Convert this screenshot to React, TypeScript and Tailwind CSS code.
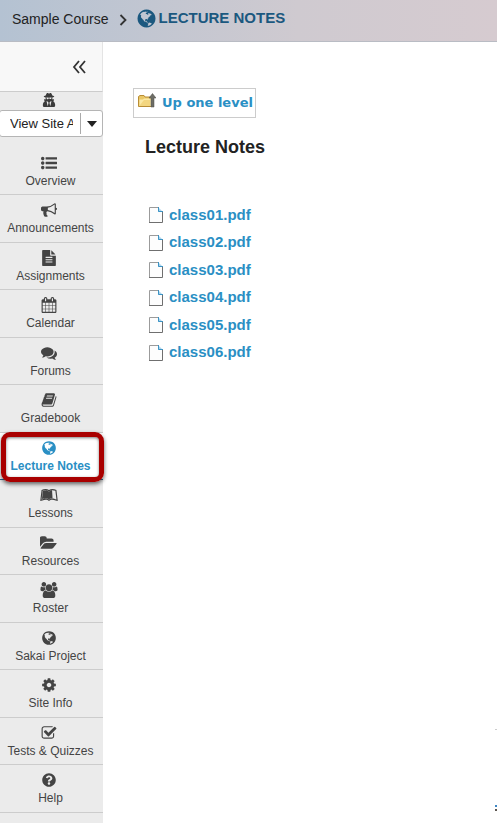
import type { ReactNode } from "react";
import { FaLeanpub, FaQuestionCircle, FaUserSecret } from "react-icons/fa";

function Glyph({ d, box = "0 0 1792 1792", className = "size-4" }: { d: string; box?: string; className?: string }) {
  return (
    <svg viewBox={box} className={className} fill="currentColor" aria-hidden="true">
      <path d={d} />
    </svg>
  );
}

const LIST =
  "M384 1408q0 80-56 136t-136 56-136-56-56-136 56-136 136-56 136 56 56 136zm0-512q0 80-56 136t-136 56-136-56-56-136 56-136 136-56 136 56 56 136zm1408 416v192q0 13-9.500 22.500t-22.500 9.500h-1216q-13 0-22.500-9.500t-9.500-22.500v-192q0-13 9.500-22.500t22.500-9.500h1216q13 0 22.500 9.500t9.500 22.500zm-1408-928q0 80-56 136t-136 56-136-56-56-136 56-136 136-56 136 56 56 136zm1408 416v192q0 13-9.500 22.500t-22.500 9.500h-1216q-13 0-22.500-9.500t-9.500-22.500v-192q0-13 9.500-22.500t22.500-9.500h1216q13 0 22.500 9.500t9.500 22.500zm0-512v192q0 13-9.500 22.500t-22.500 9.500h-1216q-13 0-22.500-9.500t-9.500-22.500v-192q0-13 9.500-22.500t22.500-9.500h1216q13 0 22.500 9.500t9.500 22.500z";
const BULLHORN =
  "M1664 640q53 0 90.5 37.5t37.5 90.5-37.5 90.5-90.5 37.5v384q0 52-38 90t-90 38q-417-347-812-380-58 19-91 66t-31 100.5 40 92.5q-20 33-23 65.5t6 58 33.5 55 48 50 61.5 50.5q-29 58-111.5 83t-168.5 11.5-132-55.5q-7-23-29.5-87.5t-32-94.5-23-89-15-101 3.5-98.5 22-110.5h-122q-66 0-113-47t-47-113v-192q0-66 47-113t113-47h480q435 0 896-384 52 0 90 38t38 90v384zm-128 604v-954q-394 302-768 343v270q377 42 768 341z";
const FILE =
  "M1596 476q14 14 28 36h-472v-472q22 14 36 28zm-476 164h544v1056q0 40-28 68t-68 28h-1344q-40 0-68-28t-28-68v-1600q0-40 28-68t68-28h800v544q0 40 28 68t68 28zm160 736v-64q0-14-9-23t-23-9h-704q-14 0-23 9t-9 23v64q0 14 9 23t23 9h704q14 0 23-9t9-23zm0-256v-64q0-14-9-23t-23-9h-704q-14 0-23 9t-9 23v64q0 14 9 23t23 9h704q14 0 23-9t9-23zm0-256v-64q0-14-9-23t-23-9h-704q-14 0-23 9t-9 23v64q0 14 9 23t23 9h704q14 0 23-9t9-23z";
const CALENDAR =
  "M192 1664h288v-288h-288v288zm352 0h320v-288h-320v288zm-352-352h288v-320h-288v320zm352 0h320v-320h-320v320zm-352-384h288v-288h-288v288zm736 736h320v-288h-320v288zm-384-736h320v-288h-320v288zm768 736h288v-288h-288v288zm-384-352h320v-320h-320v320zm-352-864v-288q0-13-9.5-22.5t-22.5-9.5h-64q-13 0-22.5 9.5t-9.5 22.5v288q0 13 9.5 22.5t22.5 9.5h64q13 0 22.5-9.5t9.5-22.5zm736 864h288v-320h-288v320zm-384-384h320v-288h-320v288zm384 0h288v-288h-288v288zm32-480v-288q0-13-9.5-22.5t-22.5-9.5h-64q-13 0-22.5 9.5t-9.5 22.5v288q0 13 9.5 22.5t22.5 9.5h64q13 0 22.5-9.5t9.5-22.5zm384-64v1280q0 52-38 90t-90 38h-1408q-52 0-90-38t-38-90v-1280q0-52 38-90t90-38h128v-96q0-66 47-113t113-47h64q66 0 113 47t47 113v96h384v-96q0-66 47-113t113-47h64q66 0 113 47t47 113v96h128q52 0 90 38t38 90z";
const COMMENTS =
  "M1408 768q0 139-94 257t-256.5 186.5-353.5 68.5q-86 0-176-16-124 88-278 128-36 9-86 16h-3q-11 0-20.5-8t-11.5-21q-1-3-1-6.5t.5-6.5 2-6l2.5-5 3.5-5.5 4-5 4.5-5 4-4.5q5-6 23-25t26-29.5 22.5-29 25-38.5 20.5-44q-124-72-195-177t-71-224q0-139 94-257t256.5-186.5 353.5-68.5 353.5 68.5 256.5 186.5 94 257zm384 256q0 120-71 224.5t-195 176.5q10 24 20.5 44t25 38.5 22.5 29 26 29.5 23 25q1 1 4 4.5t4.5 5 4 5 3.5 5.5l2.5 5 2 6 .5 6.5-1 6.5q-3 14-13 22t-22 7q-50-7-86-16-154-40-278-128-90 16-176 16-271 0-472-132 58 4 88 4 161 0 309-45t264-129q125-92 192-212t67-254q0-77-23-152 129 71 204 178t75 230z";
const BOOK =
  "M1703 478q40 57 18 129l-275 906q-19 64-76.5 107.5t-122.5 43.5h-923q-77 0-148.5-53.5t-99.5-131.5q-24-67-2-127 0-4 3-27t4-37q1-8-3-21.5t-3-19.5q2-11 8-21t16.5-23.5 16.5-23.5q23-38 45-91.5t30-91.5q3-10 .5-30t-.5-28q3-11 17-28t17-23q21-36 42-92t25-90q1-9-2.500-32t.5-28q4-13 22-30.5t22-22.5q19-26 42.5-84.5t27.5-96.5q1-8-3-25.5t-2-26.5q2-8 9-18t18-23 17-21q8-12 16.5-30.5t15-35 16-36 19.5-32 26.5-23.5 36-11.5 47.5 5.5l-1 3q38-9 51-9h761q74 0 114 56t18 130l-274 906q-36 119-71.5 153.5t-128.5 34.5h-869q-27 0-38 15-11 16-1 43 24 70 144 70h923q29 0 56-15.5t35-41.5l300-987q7-22 5-57 38 15 59 43zm-1064 2q-4 13 2 22.5t20 9.5h608q13 0 25.5-9.5t16.5-22.5l21-64q4-13-2-22.5t-20-9.5h-608q-13 0-25.5 9.5t-16.5 22.5zm-83 256q-4 13 2 22.5t20 9.5h608q13 0 25.5-9.5t16.5-22.5l21-64q4-13-2-22.5t-20-9.5h-608q-13 0-25.5 9.5t-16.5 22.5z";
const GLOBE =
  "M896 128q209 0 385.5 103t279.5 279.5 103 385.5-103 385.5-279.5 279.5-385.5 103-385.5-103-279.5-279.5-103-385.5 103-385.5 279.5-279.5 385.5-103zm274 521q-2 1-9.5 9.5t-13.5 9.5q2 0 4.5-5t5-11 3.5-7q6-7 22-15 14-6 52-12 34-8 51 11-2-2 9.5-13t14.5-12q3-2 15-4.5t15-7.5l2-22q-12 1-17.5-7t-6.5-21q0 2-6 8 0-7-4.5-8t-11.5 1-9 1q-10-3-15-7.5t-8-16.5-4-15q-2-5-9.5-11t-9.5-10q-1-2-2.5-5.5t-3-6.5-4-5.5-5.5-2.5-7 5-7.5 10-4.5 5q-3-2-6-1.5t-4.5 1-4.5 3-5 3.5q-3 2-8.5 3t-8.5 2q15-5-1-11-10-4-16-3 9-4 7.5-12t-8.5-14h5q-1-4-8.5-8.5t-17.5-8.5-13-6q-8-5-34-9.5t-33-.5q-5 6-4.5 10.5t4 14 3.5 12.5q1 6-5.5 13t-6.5 12q0 7 14 15.5t10 21.5q-3 8-16 16t-16 12q-5 8-1.5 18.5t10.5 16.5q2 2 1.5 4t-3.5 4.5-5.5 4-6.5 3.5l-3 2q-11 5-20.5-6t-13.5-26q-7-25-16-30-23-8-29 1-5-13-41-26-25-9-58-4 6-1 0-15-7-15-19-12 3-6 4-17.5t1-13.5q3-13 12-23 1-1 7-8.5t9.5-13.5.5-6q35 4 50-11 5-5 11.5-17t10.5-17q9-6 14-5.5t14.5 5.5 14.5 5q14 1 15.5-11t-7.5-20q12 1 3-17-4-7-8-9-12-4-27 5-8 4 2 8-1-1-9.5 10.5t-16.5 17.5-16-5q-1-1-5.5-13.5t-9.5-13.5q-8 0-16 15 3-8-11-15t-24-8q19-12-8-27-7-4-20.5-5t-19.5 4q-5 7-5.5 11.5t5 8 10.5 5.5 11.5 4 8.5 3q14 10 8 14-2 1-8.5 3.5t-11.5 4.5-6 4q-3 4 0 14t-2 14q-5-5-9-17.5t-7-16.5q7 9-25 6l-10-1q-4 0-16 2t-20.5 1-13.5-8q-4-8 0-20 1-4 4-2-4-3-11-9.5t-10-8.5q-46 15-94 41 6 1 12-1 5-2 13-6.5t10-5.5q34-14 42-7l5-5q14 16 20 25-7-4-30-1-20 6-22 12 7 12 5 18-4-3-11.5-10t-14.5-11-15-5q-16 0-22 1-146 80-235 222 7 7 12 8 4 1 5 9t2.5 11 11.5-3q9 8 3 19 1-1 44 27 19 17 21 21 3 11-10 18-1-2-9-9t-9-4q-3 5 .5 18.5t10.5 12.5q-7 0-9.5 16t-2.5 35.5-1 23.5l2 1q-3 12 5.5 34.5t21.5 19.5q-13 3 20 43 6 8 8 9 3 2 12 7.5t15 10 10 10.5q4 5 10 22.5t14 23.5q-2 6 9.5 20t10.5 23q-1 0-2.5 1t-2.5 1q3 7 15.5 14t15.5 13q1 3 2 10t3 11 8 2q2-20-24-62-15-25-17-29-3-5-5.5-15.5t-4.5-14.5q2 0 6 1.5t8.5 3.5 7.5 4 2 3q-3 7 2 17.5t12 18.5 17 19 12 13q6 6 14 19.5t0 13.5q9 0 20 10.5t17 19.5q5 8 8 26t5 24q2 7 8.5 13.5t12.5 9.5l16 8 13 7q5 2 18.5 10.5t21.5 11.5q10 4 16 4t14.5-2.5 13.5-3.5q15-2 29 15t21 21q36 19 55 11-2 1 .5 7.5t8 15.5 9 14.5 5.5 8.5q5 6 18 15t18 15q6-4 7-9-3 8 7 20t18 10q14-3 14-32-31 15-49-18 0-1-2.5-5.5t-4-8.5-2.5-8.5 0-7.5 5-3q9 0 10-3.5t-2-12.5-4-13q-1-8-11-20t-12-15q-5 9-16 8t-16-9q0 1-1.5 5.5t-1.5 6.5q-13 0-15-1 1-3 2.5-17.5t3.5-22.5q1-4 5.5-12t7.5-14.5 4-12.5-4.5-9.5-17.5-2.5q-19 1-26 20-1 3-3 10.5t-5 11.5-9 7q-7 3-24 2t-24-5q-13-8-22.5-29t-9.5-37q0-10 2.5-26.5t3-25-5.5-24.5q3-2 9-9.5t10-10.5q2-1 4.5-1.5t4.5 0 4-1.5 3-6q-1-1-4-3-3-3-4-3 7 3 28.5-1.5t27.5 1.5q15 11 22-2 0-1-2.5-9.5t-.5-13.5q5 27 29 9 3 3 15.5 5t17.5 5q3 2 7 5.5t5.5 4.5 5-.5 8.5-6.5q10 14 12 24 11 40 19 44 7 3 11 2t4.5-9.5 0-14-1.5-12.5l-1-8v-18l-1-8q-15-3-18.5-12t1.5-18.5 15-18.5q1-1 8-3.5t15.5-6.5 12.5-8q21-19 15-35 7 0 11-9-1 0-5-3t-7.5-5-4.5-2q9-5 2-16 5-3 7.5-11t7.5-10q9 12 21 2 8-8 1-16 5-7 20.5-10.5t18.5-9.5q7 2 8-2t1-12 3-12q4-5 15-9t13-5l17-11q3-4 0-4 18 2 31-11 10-11-6-20 3-6-3-9.5t-15-5.5q3-1 11.5-.5t10.5-1.5q15-10-7-16-17-5-43 12zm-163 877q206-36 351-189-3-3-12.5-4.5t-12.5-3.5q-18-7-24-8 1-7-2.5-13t-8-9-12.5-8-11-7q-2-2-7-6t-7-5.5-7.5-4.5-8.5-2-10 1l-3 1q-3 1-5.5 2.5t-5.5 3-4 3 0 2.5q-21-17-36-22-5-1-11-5.5t-10.5-7-10-1.5-11.5 7q-5 5-6 15t-2 13q-7-5 0-17.5t2-18.5q-3-6-10.5-4.5t-12 4.5-11.5 8.5-9 6.5-8.5 5.5-8.5 7.5q-3 4-6 12t-5 11q-2-4-11.5-6.5t-9.5-5.5q2 10 4 35t5 38q7 31-12 48-27 25-29 40-4 22 12 26 0 7-8 20.5t-7 21.5q0 6 2 16z";
const FOLDER =
  "M1815 952q0 31-31 66l-336 396q-43 51-120.5 86.5t-143.5 35.5h-1088q-34 0-60.5-13t-26.5-43q0-31 31-66l336-396q43-51 120.5-86.5t143.5-35.5h1088q34 0 60.5 13t26.500 43zm-343-344v160h-832q-94 0-197 47.5t-164 119.5l-337 396-5 6q0-4-.5-12.5t-.5-12.5v-960q0-92 66-158t158-66h320q92 0 158 66t66 158v32h544q92 0 158 66t66 158z";
const USERS =
  "M593 896q-162 5-265 128h-134q-82 0-138-40.5t-56-118.5q0-353 124-353 6 0 43.5 21t97.5 42.5 119 21.5q67 0 133-23-5 37-5 66 0 139 81 256zm1071 637q0 120-73 189.5t-194 69.5h-874q-121 0-194-69.5t-73-189.5q0-53 3.5-103.5t14-109 26.5-108.5 43-97.5 62-81 85.5-53.5 111.5-20q10 0 43 21.5t73 48 107 48 135 21.5 135-21.5 107-48 73-48 43-21.5q61 0 111.5 20t85.5 53.5 62 81 43 97.5 26.5 108.5 14 109 3.5 103.5zm-1024-1277q0 106-75 181t-181 75-181-75-75-181 75-181 181-75 181 75 75 181zm704 384q0 159-112.5 271.5t-271.5 112.5-271.5-112.5-112.5-271.5 112.5-271.5 271.5-112.5 271.5 112.5 112.5 271.5zm576 225q0 78-56 118.5t-138 40.5h-134q-103-123-265-128 81-117 81-256 0-29-5-66 66 23 133 23 59 0 119-21.5t97.5-42.5 43.5-21q124 0 124 353zm-128-609q0 106-75 181t-181 75-181-75-75-181 75-181 181-75 181 75 75 181z";
const COG =
  "M1152 896q0-106-75-181t-181-75-181 75-75 181 75 181 181 75 181-75 75-181zm512-109v222q0 12-8 23t-20 13l-185 28q-19 54-39 91 35 50 107 138 10 12 10 25t-9 23q-27 37-99 108t-94 71q-12 0-26-9l-138-108q-44 23-91 38-16 136-29 186-7 28-36 28h-222q-14 0-24.5-8.5t-11.5-21.5l-28-184q-49-16-90-37l-141 107q-10 9-25 9-14 0-25-11-126-114-165-168-7-10-7-23 0-12 8-23 15-21 51-66.5t54-70.5q-27-50-41-99l-183-27q-13-2-21-12.5t-8-23.5v-222q0-12 8-23t19-13l186-28q14-46 39-92-40-57-107-138-10-12-10-24 0-10 9-23 26-36 98.5-107.5t94.5-71.5q13 0 26 10l138 107q44-23 91-38 16-136 29-186 7-28 36-28h222q14 0 24.5 8.5t11.5 21.5l28 184q49 16 90 37l142-107q9-9 24-9 13 0 25 10 129 119 165 170 7 8 7 22 0 12-8 23-15 21-51 66.5t-54 70.5q26 50 41 98l183 28q13 2 21 12.5t8 23.5z";
const CHECK =
  "M1472 930v318q0 119-84.5 203.5t-203.5 84.5h-832q-119 0-203.5-84.5t-84.5-203.5v-832q0-119 84.5-203.5t203.5-84.5h832q63 0 117 25 15 7 18 23 3 17-9 29l-49 49q-10 10-23 10-3 0-9-2-23-6-45-6h-832q-66 0-113 47t-47 113v832q0 66 47 113t113 47h832q66 0 113-47t47-113v-254q0-13 9-22l64-64q10-10 23-10 6 0 12 3 20 8 20 29zm231-489l-814 814q-24 24-57 24t-57-24l-430-430q-24-24-24-57t24-57l110-110q24-24 57-24t57 24l263 263 647-647q24-24 57-24t57 24l110 110q24 24 24 57t-24 57z";

const tools: { label: string; icon: ReactNode; active?: boolean }[] = [
  { label: "Overview", icon: <Glyph d={LIST} /> },
  { label: "Announcements", icon: <Glyph d={BULLHORN} /> },
  { label: "Assignments", icon: <Glyph d={FILE} /> },
  { label: "Calendar", icon: <Glyph d={CALENDAR} /> },
  { label: "Forums", icon: <Glyph d={COMMENTS} /> },
  { label: "Gradebook", icon: <Glyph d={BOOK} /> },
  { label: "Lecture Notes", icon: <Glyph d={GLOBE} />, active: true },
  { label: "Lessons", icon: <FaLeanpub className="h-4 w-[18px]" /> },
  { label: "Resources", icon: <Glyph d={FOLDER} box="0 0 1920 1792" className="h-4 w-[18px]" /> },
  { label: "Roster", icon: <Glyph d={USERS} box="0 0 1920 1792" className="h-4 w-[18px]" /> },
  { label: "Sakai Project", icon: <Glyph d={GLOBE} /> },
  { label: "Site Info", icon: <Glyph d={COG} /> },
  { label: "Tests & Quizzes", icon: <Glyph d={CHECK} /> },
  { label: "Help", icon: <FaQuestionCircle className="size-[14px]" /> },
];

const files = ["class01.pdf", "class02.pdf", "class03.pdf", "class04.pdf", "class05.pdf", "class06.pdf"];

function PageIcon() {
  return (
    <svg viewBox="0 0 14 16" className="h-4 w-[14px]" aria-hidden="true">
      <path d="M.5 15.500V.5h9l4 4v11z" fill="#fdfdfd" />
      <path d="M.5 15V.5h9" fill="none" stroke="#9b9b9b" />
      <path d="M0 15.500h13.500V5" fill="none" stroke="#6f6f6f" />
      <path d="M9 0l5 5H9z" fill="#a9d4ee" />
      <path d="M9.500 0v4.500H14" fill="none" stroke="#3c93c4" />
    </svg>
  );
}

function UpFolderIcon() {
  return (
    <svg viewBox="0 0 18 16" className="mb-1 h-4 w-[18px]" aria-hidden="true">
      <path d="M.5 13.500V3.500L2 2.500h4l1 1.500h6.500v9.500z" fill="#e9c766" stroke="#b98d35" />
      <path d="M1.500 13V6.500H5L6 5.500h7V13z" fill="#fbe9a6" />
      <path d="M2 12l4-5h6v6H2z" fill="#f3d680" />
      <path d="M14.500.5L18 5h-2v9h-3V5h-2z" fill="#6d6d66" stroke="#4f4f4a" strokeWidth=".5" />
    </svg>
  );
}

export default function App() {
  return (
    <div className="relative flex min-h-screen flex-col overflow-hidden bg-white font-['Liberation_Sans',Arial,sans-serif]">
      <header className="flex h-[42px] items-center border-b border-[#b9bcc4] bg-linear-to-r from-[#b4c2d2] via-[#cfcad0] via-60% to-[#d6cbd0] pb-1 pl-3">
        <a href="#course" className="text-sm text-[#222]">Sample Course</a>
        <svg viewBox="0 0 8 12" className="mt-[2px] ml-[10px] h-3 w-2" fill="none" stroke="#333" strokeWidth="1.800" aria-hidden="true">
          <path d="M1.500 1l5 5-5 5" />
        </svg>
        <a href="#notes" className="ml-[9px] flex items-center gap-[2px] text-[15px] font-bold text-[#1b587f]">
          <Glyph d={GLOBE} className="size-[21px]" />
          LECTURE NOTES
        </a>
      </header>

      <div className="flex flex-1">
        <aside className="w-[103px] shrink-0 bg-[#ebebeb]">
          <div className="flex h-[50px] items-center justify-end border-r border-b border-r-[#e4e4e4] border-b-[#ccc] bg-[#f8f8f8] pr-4">
            <button type="button" aria-label="Collapse menu" className="text-[#333]">
              <svg viewBox="0 0 14 14" className="size-[14px]" fill="none" stroke="currentColor" strokeWidth="1.800" aria-hidden="true">
                <path d="M7 1L2 7l5 6M13 1L8 7l5 6" />
              </svg>
            </button>
          </div>
          <div className="flex h-[18px] items-start justify-center pt-px pr-[6px] text-[#3b3b3b]">
            <FaUserSecret className="size-[14px]" />
          </div>
          <div className="relative -ml-px">
            <select
              aria-label="View site as"
              className="block h-[27px] w-full appearance-none rounded-[3px] border border-[#b5b5b5] bg-white pr-[29px] pl-[10px] text-[13px] text-[#222]"
            >
              <option>View Site As:</option>
            </select>
            <span className="pointer-events-none absolute inset-y-[3px] right-0 flex w-[23px] items-center justify-center border-l border-[#aaa]">
              <svg viewBox="0 0 10 6" className="h-[6px] w-[10px]" fill="#222" aria-hidden="true">
                <path d="M0 0h10L5 6z" />
              </svg>
            </span>
          </div>
          <nav aria-label="Site tools" className="pt-[11px]">
            <ul>
              {tools.map((t) => (
                <li
                  key={t.label}
                  className={`relative h-12 border-b odd:h-[47px] ${t.active ? "border-[#2a6f9e] bg-white" : "border-[#ccc]"}`}
                >
                  <a
                    href="#tool"
                    aria-current={t.active ? "page" : undefined}
                    className={`flex h-full flex-col items-center gap-px pt-[6px] pr-[2px] text-xs leading-4 whitespace-nowrap ${
                      t.active ? "font-bold text-[#2a8fc4]" : "text-[#444]"
                    }`}
                  >
                    <span className="flex h-[18px] items-center justify-center pr-1">{t.icon}</span>
                    <span>{t.label}</span>
                  </a>
                  {t.active && (
                    <span className="pointer-events-none absolute -top-px -right-px -bottom-[3px] left-px z-10 rounded-[9px] border-5 border-[#a90000] shadow-[0_2px_4px_rgba(0,0,0,0.6),inset_0_1px_3px_rgba(0,0,0,0.5)]" />
                  )}
                </li>
              ))}
            </ul>
          </nav>
        </aside>

        <main className="flex flex-1 flex-col items-start pt-[46px] pl-[30px]">
          <a
            href="#up"
            className="flex h-[30px] items-center gap-[6px] border border-[#ccc] pr-[2px] pl-1 font-['DejaVu_Sans',Verdana,sans-serif] text-[13px] font-bold text-[#2a8fc4]"
          >
            <UpFolderIcon />
            Up one level
          </a>
          <h1 className="mt-[17px] ml-3 text-lg leading-6 font-bold text-[#222]">Lecture Notes</h1>
          <ul className="mt-[42px] ml-4">
            {files.map((f) => (
              <li key={f} className="flex h-7 items-center even:h-[27px]">
                <a href="#file" className="flex items-center gap-[6px] text-[15px] font-bold text-[#2a8fc4]">
                  <PageIcon />
                  {f}
                </a>
              </li>
            ))}
          </ul>
        </main>
      </div>
      <span className="absolute right-0 bottom-[93px] h-px w-[2px] bg-[#ccc]" />
      <span className="absolute right-0 bottom-[12px] h-[6px] w-[2px] border-t-2 border-b-2 border-t-[#3d86c4] border-b-[#5c5650]" />
    </div>
  );
}
